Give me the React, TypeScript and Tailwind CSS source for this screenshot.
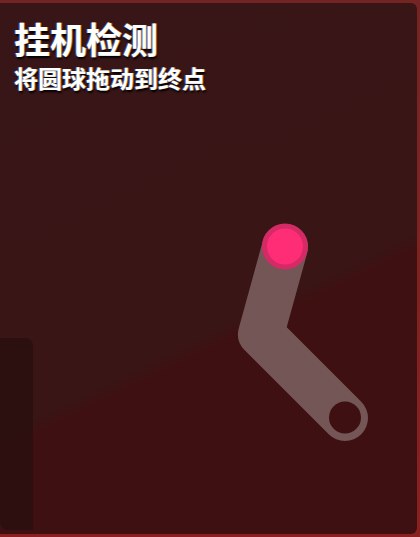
import React from "react";

const Track = () => (
  <svg
    className="absolute inset-0"
    width={420}
    height={537}
    viewBox="0 0 420 537"
    fill="none"
  >
    {/* drag path */}
    <polyline
      points="285,247 261,334 345,418"
      stroke="#745656"
      strokeWidth={46}
      strokeLinecap="round"
      strokeLinejoin="round"
    />
    {/* end point */}
    <circle cx={345} cy={417.5} r={16} fill="#3e1011" />
    {/* ball */}
    <circle cx={285} cy={246.5} r={20.5} fill="#ff2d75" stroke="#d42a66" strokeWidth={5} />
  </svg>
);

export default function App() {
  return (
    <div className="relative w-[420px] h-[537px] overflow-hidden bg-[linear-gradient(180deg,#752424_0%,#8a2020_100%)] pt-[3px] pr-[3px] pb-[3px] font-['Noto_Sans_CJK_SC','Noto_Sans',sans-serif]">
      <div className="relative h-full w-full rounded-r-md bg-[linear-gradient(154deg,#381516_0%,#391516_59%,#3f1011_61%,#3f1011_100%)]">
        {/* header */}
        <div className="px-[14px] pt-[13px] flex flex-col gap-[3px] text-white font-bold [text-shadow:-1px_0_rgba(59,130,246,0.6),1px_0_rgba(245,158,11,0.6),1px_2px_2px_#000]">
          <h1 className="text-[36px] leading-[44px]">挂机检测</h1>
          <p className="text-[24px] leading-[30px]">将圆球拖动到终点</p>
        </div>

        {/* side panel */}
        <div className="absolute left-0 top-[335px] w-[33px] h-[192px] rounded-tr-lg rounded-bl-lg bg-[#2b0f10]/90" />
      </div>
      <Track />
    </div>
  );
}
